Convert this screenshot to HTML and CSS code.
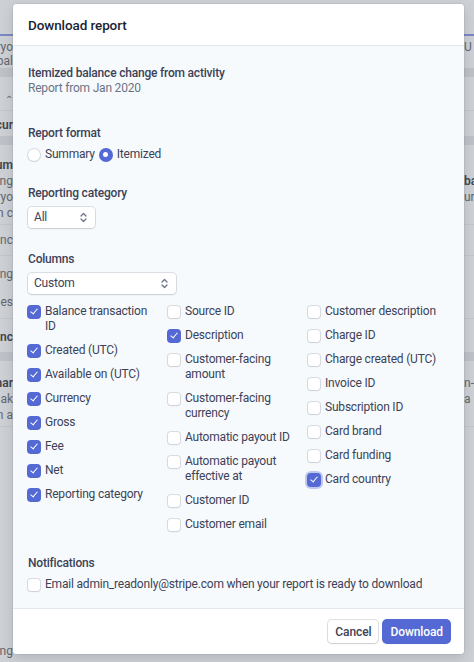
FILE: index.html
```html
<!DOCTYPE html>
<html>
<head>
<meta charset="utf-8">
<link rel="stylesheet" href="styles.css">
</head>
<body>
<div class="page">
  <div class="bg-row h34"><span class="l"></span><span class="r"></span></div>
  <div class="bg-tab"></div>
  <div class="bg-row h14 t"><span class="l">ryo</span><span class="r">U</span></div>
  <div class="bg-row h14 t"><span class="l">bal</span><span class="r"></span></div>
  <div class="bg-band"></div>
  <div class="bg-row h14"></div>
  <div class="bg-row h16 t"><span class="l sel">⌃</span><span class="r"></span></div>
  <div class="bg-line"></div>
  <div class="bg-row h22 t"><span class="l b">ncur</span><span class="r"></span></div>
  <div class="bg-band"></div>
  <div class="bg-row h12"></div>
  <div class="bg-row h16 t"><span class="l b">sum</span><span class="r"></span></div>
  <div class="bg-row h16 t"><span class="l">ing</span><span class="r b">ba</span></div>
  <div class="bg-row h16 t"><span class="l">ryo</span><span class="r">ur</span></div>
  <div class="bg-row h16 t"><span class="l">n c</span><span class="r"></span></div>
  <div class="bg-line"></div>
  <div class="bg-row h24 t"><span class="l">anc</span><span class="r"></span></div>
  <div class="bg-line"></div>
  <div class="bg-row h30 t"><span class="l">ng</span><span class="r"></span></div>
  <div class="bg-row h26 t"><span class="l">es</span><span class="r"></span></div>
  <div class="bg-line"></div>
  <div class="bg-row h30 t"><span class="l b">nc</span><span class="r"></span></div>
  <div class="bg-band"></div>
  <div class="bg-row h14"></div>
  <div class="bg-row h16 t"><span class="l b">mar</span><span class="r">n-</span></div>
  <div class="bg-row h16 t"><span class="l">ak</span><span class="r">a</span></div>
  <div class="bg-row h16 t"><span class="l">n a</span><span class="r"></span></div>
  <div class="bg-line"></div>
</div>
<div class="bg-bottom"><span class="l">ang</span></div>

<div class="overlay">
  <div class="modal">
    <div class="modal-header">Download report</div>
    <div class="modal-body">
      <div class="intro">
        <div class="strong">Itemized balance change from activity</div>
        <div class="muted">Report from Jan 2020</div>
      </div>

      <div class="section">
        <div class="label">Report format</div>
        <div class="radios">
          <label class="opt"><span class="radio"></span>Summary</label>
          <label class="opt"><span class="radio on"></span>Itemized</label>
        </div>
      </div>

      <div class="section">
        <div class="label">Reporting category</div>
        <div class="select small"><span>All</span>
          <svg class="chev" width="7" height="11" viewBox="0 0 7 11"><path d="M1 4 L3.5 1.5 L6 4 M1 7 L3.5 9.5 L6 7" fill="none" stroke="#6b7385" stroke-width="1.3" stroke-linecap="round" stroke-linejoin="round"/></svg>
        </div>
      </div>

      <div class="section">
        <div class="label">Columns</div>
        <div class="select wide"><span>Custom</span>
          <svg class="chev" width="7" height="11" viewBox="0 0 7 11"><path d="M1 4 L3.5 1.5 L6 4 M1 7 L3.5 9.5 L6 7" fill="none" stroke="#6b7385" stroke-width="1.3" stroke-linecap="round" stroke-linejoin="round"/></svg>
        </div>
        <div class="cols">
          <div class="col">
            <label class="cb"><span class="box on"></span><span>Balance transaction<br>ID</span></label>
            <label class="cb"><span class="box on"></span><span>Created (UTC)</span></label>
            <label class="cb"><span class="box on"></span><span>Available on (UTC)</span></label>
            <label class="cb"><span class="box on"></span><span>Currency</span></label>
            <label class="cb"><span class="box on"></span><span>Gross</span></label>
            <label class="cb"><span class="box on"></span><span>Fee</span></label>
            <label class="cb"><span class="box on"></span><span>Net</span></label>
            <label class="cb"><span class="box on"></span><span>Reporting category</span></label>
          </div>
          <div class="col">
            <label class="cb"><span class="box"></span><span>Source ID</span></label>
            <label class="cb"><span class="box on"></span><span>Description</span></label>
            <label class="cb"><span class="box"></span><span>Customer-facing<br>amount</span></label>
            <label class="cb"><span class="box"></span><span>Customer-facing<br>currency</span></label>
            <label class="cb"><span class="box"></span><span>Automatic payout ID</span></label>
            <label class="cb"><span class="box"></span><span>Automatic payout<br>effective at</span></label>
            <label class="cb"><span class="box"></span><span>Customer ID</span></label>
            <label class="cb"><span class="box"></span><span>Customer email</span></label>
          </div>
          <div class="col">
            <label class="cb"><span class="box"></span><span>Customer description</span></label>
            <label class="cb"><span class="box"></span><span>Charge ID</span></label>
            <label class="cb"><span class="box"></span><span>Charge created (UTC)</span></label>
            <label class="cb"><span class="box"></span><span>Invoice ID</span></label>
            <label class="cb"><span class="box"></span><span>Subscription ID</span></label>
            <label class="cb"><span class="box"></span><span>Card brand</span></label>
            <label class="cb"><span class="box"></span><span>Card funding</span></label>
            <label class="cb"><span class="box on focus"></span><span>Card country</span></label>
          </div>
        </div>
      </div>

      <div class="section">
        <div class="label">Notifications</div>
        <label class="cb"><span class="box"></span><span>Email admin_readonly@stripe.com when your report is ready to download</span></label>
      </div>
    </div>
    <div class="modal-footer">
      <button class="btn">Cancel</button>
      <button class="btn primary">Download</button>
    </div>
  </div>
</div>
</body>
</html>
```

FILE: styles.css
```css
* { box-sizing: border-box; }
html, body { margin: 0; padding: 0; }
body {
  width: 474px;
  height: 662px;
  overflow: hidden;
  background: #cdd0d4;
  font-family: Roboto, "Noto Sans", "Liberation Sans", sans-serif;
  position: relative;
}

/* dimmed background page */
.page { display: flex; flex-direction: column; }
.bg-row { display: flex; justify-content: space-between; align-items: center; }
.bg-row .l, .bg-bottom .l {
  width: 13px; overflow: hidden; white-space: nowrap;
  display: flex; justify-content: flex-end;
  font-size: 12px; color: #62666d;
}
.bg-row .r {
  width: 10px; overflow: hidden; white-space: nowrap;
  font-size: 12px; color: #62666d;
}
.bg-row .b { font-weight: 600; color: #3f434a; }
.bg-row .sel { font-size: 10px; }
.h12 { height: 12px; } .h14 { height: 14px; } .h16 { height: 16px; }
.h22 { height: 22px; } .h24 { height: 24px; } .h26 { height: 26px; } .h30 { height: 30px; } .h34 { height: 34px; }
.bg-tab { height: 2px; background: #7b86c6; margin-bottom: 4px; width: 100%; }
.bg-band { height: 9px; background: #bec1c6; }
.bg-line { height: 1px; background: #c2c5ca; margin: 3px 0; }
.bg-bottom { position: absolute; left: 0; top: 644px; }

/* modal */
.overlay {
  position: absolute; inset: 0;
  padding: 4px 0 0 13px;
}
.modal {
  width: 451px;
  height: 650px;
  border-radius: 4px;
  overflow: hidden;
  background: #f7fafc;
  box-shadow: 0 0 0 1px rgba(60,66,87,0.08), 0 4px 12px rgba(60,66,87,0.18);
  display: flex; flex-direction: column;
  color: #3c4257;
}
.modal-header {
  flex: none;
  height: 42px;
  background: #fff;
  border-bottom: 1px solid #e3e8ee;
  padding: 1px 15px 0;
  display: flex; align-items: center;
  font-size: 13.5px; font-weight: 500;
  letter-spacing: -0.1px;
  color: #1a1f36;
}
.modal-body {
  flex: 1;
  min-height: 0;
  overflow: hidden;
  padding: 20px 15px 0;
  font-size: 12px;
  line-height: 15px;
  letter-spacing: -0.2px;
}
.intro { margin-bottom: 30px; }
.strong { font-weight: 500; }
.muted { color: #697386; }
.section { margin-bottom: 24px; }
.label { font-weight: 500; margin-bottom: 6px; }

.radios { display: flex; gap: 5px; }
.opt { display: flex; align-items: center; gap: 5px; }
.radio {
  width: 12px; height: 12px; border-radius: 50%;
  background: #fff;
  box-shadow: 0 0 0 1px rgba(60,66,87,0.16), 0 1px 2px rgba(60,66,87,0.08);
  position: relative;
}
.radio.on { background: #5469d4; box-shadow: 0 0 0 1px #5469d4; }
.radio.on::after {
  content: ""; position: absolute; left: 3.5px; top: 3.5px;
  width: 5px; height: 5px; border-radius: 50%; background: #fff;
}

.select {
  height: 21px;
  background: #fff;
  border-radius: 4px;
  box-shadow: 0 0 0 1px rgba(60,66,87,0.14), 0 1px 2px rgba(60,66,87,0.12);
  display: flex; align-items: center; justify-content: space-between;
  padding: 0 8px 0 6px;
}
.select.small { width: 67px; }
.select.wide { width: 148px; }
.chev { display: block; }

.cols {
  margin-top: 10px;
  display: grid;
  grid-template-columns: 140px 140px 1fr;
}
.col { display: flex; flex-direction: column; gap: 9px; }
.cb { display: flex; align-items: flex-start; gap: 5px; }
.box {
  flex: none;
  width: 12px; height: 12px; margin-top: 1.5px;
  border-radius: 3px;
  background: #fff;
  box-shadow: 0 0 0 1px rgba(60,66,87,0.16), 0 1px 2px rgba(60,66,87,0.08);
  position: relative;
}
.box.on {
  background: #5469d4;
  box-shadow: 0 0 0 1px #5469d4;
}
.box.on::after {
  content: "";
  position: absolute; left: 4px; top: 1.5px;
  width: 3px; height: 6px;
  border: solid #fff; border-width: 0 1.5px 1.5px 0;
  transform: rotate(40deg);
}
.box.focus { box-shadow: 0 0 0 1px #5469d4, 0 0 0 3px rgba(84,105,212,0.35); }

.modal-footer {
  flex: none;
  height: 46px;
  background: #fff;
  border-top: 1px solid #e3e8ee;
  display: flex; justify-content: flex-end; align-items: center; gap: 5px;
  padding: 0 14px;
}
.btn {
  height: 23px;
  border: 0;
  border-radius: 4px;
  font-family: inherit;
  font-size: 12px; font-weight: 500;
  letter-spacing: -0.1px;
  padding: 0 7px;
  background: #fff;
  color: #3c4257;
  box-shadow: 0 0 0 1px rgba(60,66,87,0.16), 0 1px 2px rgba(60,66,87,0.12);
}
.btn.primary {
  background: #5469d4;
  color: #fff;
  box-shadow: 0 0 0 1px #5469d4, 0 1px 2px rgba(60,66,87,0.12);
}
```
